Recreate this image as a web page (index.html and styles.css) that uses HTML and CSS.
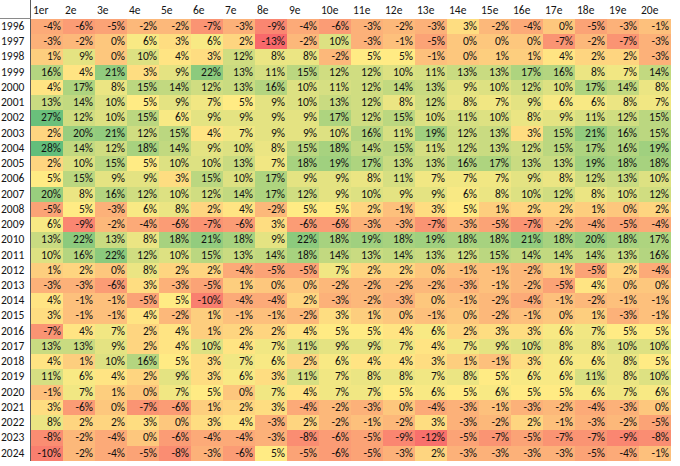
FILE: index.html
```html
<!DOCTYPE html>
<html lang="fr">
<head>
<meta charset="utf-8">
<title>Rendements par arrondissement</title>
<link rel="stylesheet" href="styles.css">
</head>
<body>
<div class="sheet">
<div class="row head"><div class="corner"></div><div>1er</div><div>2e</div><div>3e</div><div>4e</div><div>5e</div><div>6e</div><div>7e</div><div>8e</div><div>9e</div><div>10e</div><div>11e</div><div>12e</div><div>13e</div><div>14e</div><div>15e</div><div>16e</div><div>17e</div><div>18e</div><div>19e</div><div>20e</div></div>
<div class="row"><div class="yr">1996</div><div class="n4">-4%</div><div class="n6">-6%</div><div class="n5">-5%</div><div class="n2">-2%</div><div class="n2">-2%</div><div class="n7">-7%</div><div class="n3">-3%</div><div class="n9">-9%</div><div class="n4">-4%</div><div class="n6">-6%</div><div class="n3">-3%</div><div class="n2">-2%</div><div class="n3">-3%</div><div class="p3">3%</div><div class="n2">-2%</div><div class="n4">-4%</div><div class="p0">0%</div><div class="n5">-5%</div><div class="n3">-3%</div><div class="n1">-1%</div></div>
<div class="row"><div class="yr">1997</div><div class="n3">-3%</div><div class="n2">-2%</div><div class="p0">0%</div><div class="p6">6%</div><div class="p3">3%</div><div class="p6">6%</div><div class="p2">2%</div><div class="n13">-13%</div><div class="n2">-2%</div><div class="p10">10%</div><div class="n3">-3%</div><div class="n1">-1%</div><div class="n5">-5%</div><div class="p0">0%</div><div class="p0">0%</div><div class="p0">0%</div><div class="n7">-7%</div><div class="n2">-2%</div><div class="n7">-7%</div><div class="n3">-3%</div></div>
<div class="row"><div class="yr">1998</div><div class="p1">1%</div><div class="p9">9%</div><div class="p0">0%</div><div class="p10">10%</div><div class="p4">4%</div><div class="p3">3%</div><div class="p12">12%</div><div class="p8">8%</div><div class="p8">8%</div><div class="n2">-2%</div><div class="p5">5%</div><div class="p5">5%</div><div class="n1">-1%</div><div class="p0">0%</div><div class="p1">1%</div><div class="p1">1%</div><div class="p4">4%</div><div class="p2">2%</div><div class="p2">2%</div><div class="n3">-3%</div></div>
<div class="row"><div class="yr">1999</div><div class="p16">16%</div><div class="p4">4%</div><div class="p21">21%</div><div class="p3">3%</div><div class="p9">9%</div><div class="p22">22%</div><div class="p13">13%</div><div class="p11">11%</div><div class="p15">15%</div><div class="p12">12%</div><div class="p12">12%</div><div class="p10">10%</div><div class="p11">11%</div><div class="p13">13%</div><div class="p13">13%</div><div class="p17">17%</div><div class="p16">16%</div><div class="p8">8%</div><div class="p7">7%</div><div class="p14">14%</div></div>
<div class="row"><div class="yr">2000</div><div class="p4">4%</div><div class="p17">17%</div><div class="p8">8%</div><div class="p15">15%</div><div class="p14">14%</div><div class="p12">12%</div><div class="p13">13%</div><div class="p16">16%</div><div class="p10">10%</div><div class="p11">11%</div><div class="p12">12%</div><div class="p14">14%</div><div class="p13">13%</div><div class="p9">9%</div><div class="p10">10%</div><div class="p12">12%</div><div class="p10">10%</div><div class="p17">17%</div><div class="p14">14%</div><div class="p8">8%</div></div>
<div class="row"><div class="yr">2001</div><div class="p13">13%</div><div class="p14">14%</div><div class="p10">10%</div><div class="p5">5%</div><div class="p9">9%</div><div class="p7">7%</div><div class="p5">5%</div><div class="p9">9%</div><div class="p10">10%</div><div class="p13">13%</div><div class="p12">12%</div><div class="p8">8%</div><div class="p12">12%</div><div class="p8">8%</div><div class="p7">7%</div><div class="p9">9%</div><div class="p6">6%</div><div class="p6">6%</div><div class="p8">8%</div><div class="p7">7%</div></div>
<div class="row"><div class="yr">2002</div><div class="p27">27%</div><div class="p12">12%</div><div class="p10">10%</div><div class="p15">15%</div><div class="p6">6%</div><div class="p9">9%</div><div class="p9">9%</div><div class="p9">9%</div><div class="p9">9%</div><div class="p17">17%</div><div class="p12">12%</div><div class="p15">15%</div><div class="p10">10%</div><div class="p11">11%</div><div class="p10">10%</div><div class="p8">8%</div><div class="p9">9%</div><div class="p11">11%</div><div class="p12">12%</div><div class="p15">15%</div></div>
<div class="row"><div class="yr">2003</div><div class="p2">2%</div><div class="p20">20%</div><div class="p21">21%</div><div class="p12">12%</div><div class="p15">15%</div><div class="p4">4%</div><div class="p7">7%</div><div class="p9">9%</div><div class="p9">9%</div><div class="p10">10%</div><div class="p16">16%</div><div class="p11">11%</div><div class="p19">19%</div><div class="p12">12%</div><div class="p13">13%</div><div class="p3">3%</div><div class="p15">15%</div><div class="p21">21%</div><div class="p16">16%</div><div class="p15">15%</div></div>
<div class="row"><div class="yr">2004</div><div class="p28">28%</div><div class="p14">14%</div><div class="p12">12%</div><div class="p18">18%</div><div class="p14">14%</div><div class="p9">9%</div><div class="p10">10%</div><div class="p8">8%</div><div class="p15">15%</div><div class="p18">18%</div><div class="p14">14%</div><div class="p15">15%</div><div class="p11">11%</div><div class="p12">12%</div><div class="p13">13%</div><div class="p12">12%</div><div class="p15">15%</div><div class="p17">17%</div><div class="p16">16%</div><div class="p19">19%</div></div>
<div class="row"><div class="yr">2005</div><div class="p2">2%</div><div class="p10">10%</div><div class="p15">15%</div><div class="p5">5%</div><div class="p10">10%</div><div class="p10">10%</div><div class="p13">13%</div><div class="p7">7%</div><div class="p18">18%</div><div class="p19">19%</div><div class="p17">17%</div><div class="p13">13%</div><div class="p13">13%</div><div class="p16">16%</div><div class="p17">17%</div><div class="p13">13%</div><div class="p13">13%</div><div class="p19">19%</div><div class="p18">18%</div><div class="p18">18%</div></div>
<div class="row"><div class="yr">2006</div><div class="p5">5%</div><div class="p15">15%</div><div class="p9">9%</div><div class="p9">9%</div><div class="p3">3%</div><div class="p15">15%</div><div class="p10">10%</div><div class="p17">17%</div><div class="p9">9%</div><div class="p9">9%</div><div class="p8">8%</div><div class="p11">11%</div><div class="p7">7%</div><div class="p7">7%</div><div class="p7">7%</div><div class="p9">9%</div><div class="p8">8%</div><div class="p12">12%</div><div class="p13">13%</div><div class="p10">10%</div></div>
<div class="row"><div class="yr">2007</div><div class="p20">20%</div><div class="p8">8%</div><div class="p16">16%</div><div class="p12">12%</div><div class="p10">10%</div><div class="p12">12%</div><div class="p14">14%</div><div class="p17">17%</div><div class="p12">12%</div><div class="p9">9%</div><div class="p10">10%</div><div class="p9">9%</div><div class="p9">9%</div><div class="p6">6%</div><div class="p8">8%</div><div class="p10">10%</div><div class="p12">12%</div><div class="p8">8%</div><div class="p10">10%</div><div class="p12">12%</div></div>
<div class="row"><div class="yr">2008</div><div class="n5">-5%</div><div class="p5">5%</div><div class="n3">-3%</div><div class="p6">6%</div><div class="p8">8%</div><div class="p2">2%</div><div class="p4">4%</div><div class="n2">-2%</div><div class="p5">5%</div><div class="p5">5%</div><div class="p2">2%</div><div class="n1">-1%</div><div class="p3">3%</div><div class="p5">5%</div><div class="p1">1%</div><div class="p2">2%</div><div class="p2">2%</div><div class="p1">1%</div><div class="p0">0%</div><div class="p2">2%</div></div>
<div class="row"><div class="yr">2009</div><div class="p6">6%</div><div class="n9">-9%</div><div class="n2">-2%</div><div class="n4">-4%</div><div class="n6">-6%</div><div class="n7">-7%</div><div class="n6">-6%</div><div class="p3">3%</div><div class="n6">-6%</div><div class="n6">-6%</div><div class="n3">-3%</div><div class="n3">-3%</div><div class="n7">-7%</div><div class="n3">-3%</div><div class="n5">-5%</div><div class="n7">-7%</div><div class="n2">-2%</div><div class="n4">-4%</div><div class="n5">-5%</div><div class="n4">-4%</div></div>
<div class="row"><div class="yr">2010</div><div class="p13">13%</div><div class="p22">22%</div><div class="p13">13%</div><div class="p8">8%</div><div class="p18">18%</div><div class="p21">21%</div><div class="p18">18%</div><div class="p9">9%</div><div class="p22">22%</div><div class="p18">18%</div><div class="p19">19%</div><div class="p18">18%</div><div class="p19">19%</div><div class="p18">18%</div><div class="p18">18%</div><div class="p21">21%</div><div class="p18">18%</div><div class="p20">20%</div><div class="p18">18%</div><div class="p17">17%</div></div>
<div class="row"><div class="yr">2011</div><div class="p10">10%</div><div class="p16">16%</div><div class="p22">22%</div><div class="p12">12%</div><div class="p10">10%</div><div class="p15">15%</div><div class="p13">13%</div><div class="p14">14%</div><div class="p18">18%</div><div class="p14">14%</div><div class="p13">13%</div><div class="p14">14%</div><div class="p13">13%</div><div class="p12">12%</div><div class="p15">15%</div><div class="p14">14%</div><div class="p14">14%</div><div class="p14">14%</div><div class="p13">13%</div><div class="p16">16%</div></div>
<div class="row"><div class="yr">2012</div><div class="p1">1%</div><div class="p2">2%</div><div class="p0">0%</div><div class="p8">8%</div><div class="p2">2%</div><div class="p2">2%</div><div class="n4">-4%</div><div class="n5">-5%</div><div class="n5">-5%</div><div class="p7">7%</div><div class="p2">2%</div><div class="p2">2%</div><div class="p0">0%</div><div class="n1">-1%</div><div class="n1">-1%</div><div class="n2">-2%</div><div class="p1">1%</div><div class="n5">-5%</div><div class="p2">2%</div><div class="n4">-4%</div></div>
<div class="row"><div class="yr">2013</div><div class="n3">-3%</div><div class="n3">-3%</div><div class="n6">-6%</div><div class="p3">3%</div><div class="n3">-3%</div><div class="n5">-5%</div><div class="p1">1%</div><div class="p0">0%</div><div class="p0">0%</div><div class="n2">-2%</div><div class="n2">-2%</div><div class="n2">-2%</div><div class="n2">-2%</div><div class="n3">-3%</div><div class="n1">-1%</div><div class="n2">-2%</div><div class="n5">-5%</div><div class="p4">4%</div><div class="p0">0%</div><div class="p0">0%</div></div>
<div class="row"><div class="yr">2014</div><div class="p4">4%</div><div class="n1">-1%</div><div class="n1">-1%</div><div class="n5">-5%</div><div class="p5">5%</div><div class="n10">-10%</div><div class="n4">-4%</div><div class="n4">-4%</div><div class="p2">2%</div><div class="n3">-3%</div><div class="n2">-2%</div><div class="n3">-3%</div><div class="p0">0%</div><div class="n1">-1%</div><div class="n2">-2%</div><div class="n4">-4%</div><div class="n1">-1%</div><div class="n2">-2%</div><div class="n1">-1%</div><div class="n1">-1%</div></div>
<div class="row"><div class="yr">2015</div><div class="p3">3%</div><div class="n1">-1%</div><div class="n1">-1%</div><div class="p4">4%</div><div class="n2">-2%</div><div class="p1">1%</div><div class="n1">-1%</div><div class="n1">-1%</div><div class="n2">-2%</div><div class="p3">3%</div><div class="p1">1%</div><div class="p0">0%</div><div class="n1">-1%</div><div class="p0">0%</div><div class="n2">-2%</div><div class="n1">-1%</div><div class="p0">0%</div><div class="p1">1%</div><div class="n3">-3%</div><div class="n1">-1%</div></div>
<div class="row"><div class="yr">2016</div><div class="n7">-7%</div><div class="p4">4%</div><div class="p7">7%</div><div class="p2">2%</div><div class="p4">4%</div><div class="p1">1%</div><div class="p2">2%</div><div class="p2">2%</div><div class="p4">4%</div><div class="p5">5%</div><div class="p5">5%</div><div class="p4">4%</div><div class="p6">6%</div><div class="p2">2%</div><div class="p3">3%</div><div class="p3">3%</div><div class="p6">6%</div><div class="p7">7%</div><div class="p5">5%</div><div class="p5">5%</div></div>
<div class="row"><div class="yr">2017</div><div class="p13">13%</div><div class="p13">13%</div><div class="p9">9%</div><div class="p2">2%</div><div class="p4">4%</div><div class="p10">10%</div><div class="p4">4%</div><div class="p7">7%</div><div class="p11">11%</div><div class="p9">9%</div><div class="p9">9%</div><div class="p7">7%</div><div class="p4">4%</div><div class="p7">7%</div><div class="p9">9%</div><div class="p10">10%</div><div class="p8">8%</div><div class="p8">8%</div><div class="p10">10%</div><div class="p10">10%</div></div>
<div class="row"><div class="yr">2018</div><div class="p4">4%</div><div class="p1">1%</div><div class="p10">10%</div><div class="p16">16%</div><div class="p5">5%</div><div class="p3">3%</div><div class="p7">7%</div><div class="p6">6%</div><div class="p2">2%</div><div class="p6">6%</div><div class="p4">4%</div><div class="p4">4%</div><div class="p3">3%</div><div class="p1">1%</div><div class="n1">-1%</div><div class="p3">3%</div><div class="p6">6%</div><div class="p6">6%</div><div class="p8">8%</div><div class="p5">5%</div></div>
<div class="row"><div class="yr">2019</div><div class="p11">11%</div><div class="p6">6%</div><div class="p4">4%</div><div class="p2">2%</div><div class="p9">9%</div><div class="p3">3%</div><div class="p6">6%</div><div class="p3">3%</div><div class="p11">11%</div><div class="p7">7%</div><div class="p8">8%</div><div class="p8">8%</div><div class="p7">7%</div><div class="p8">8%</div><div class="p5">5%</div><div class="p6">6%</div><div class="p6">6%</div><div class="p11">11%</div><div class="p8">8%</div><div class="p10">10%</div></div>
<div class="row"><div class="yr">2020</div><div class="n1">-1%</div><div class="p7">7%</div><div class="p1">1%</div><div class="p0">0%</div><div class="p7">7%</div><div class="p5">5%</div><div class="p0">0%</div><div class="p7">7%</div><div class="p4">4%</div><div class="p7">7%</div><div class="p7">7%</div><div class="p5">5%</div><div class="p6">6%</div><div class="p5">5%</div><div class="p6">6%</div><div class="p5">5%</div><div class="p5">5%</div><div class="p6">6%</div><div class="p7">7%</div><div class="p6">6%</div></div>
<div class="row"><div class="yr">2021</div><div class="p3">3%</div><div class="n6">-6%</div><div class="p0">0%</div><div class="n7">-7%</div><div class="n6">-6%</div><div class="p1">1%</div><div class="p2">2%</div><div class="p3">3%</div><div class="n4">-4%</div><div class="n2">-2%</div><div class="n3">-3%</div><div class="p0">0%</div><div class="n4">-4%</div><div class="n3">-3%</div><div class="n1">-1%</div><div class="n3">-3%</div><div class="n2">-2%</div><div class="n4">-4%</div><div class="n3">-3%</div><div class="p0">0%</div></div>
<div class="row"><div class="yr">2022</div><div class="p8">8%</div><div class="p2">2%</div><div class="p2">2%</div><div class="p3">3%</div><div class="p0">0%</div><div class="p3">3%</div><div class="p4">4%</div><div class="n3">-3%</div><div class="p2">2%</div><div class="n2">-2%</div><div class="n1">-1%</div><div class="n2">-2%</div><div class="p3">3%</div><div class="n3">-3%</div><div class="n2">-2%</div><div class="p2">2%</div><div class="n1">-1%</div><div class="n3">-3%</div><div class="n2">-2%</div><div class="n5">-5%</div></div>
<div class="row"><div class="yr">2023</div><div class="n8">-8%</div><div class="n2">-2%</div><div class="n4">-4%</div><div class="p0">0%</div><div class="n6">-6%</div><div class="n4">-4%</div><div class="n4">-4%</div><div class="n3">-3%</div><div class="n8">-8%</div><div class="n6">-6%</div><div class="n5">-5%</div><div class="n9">-9%</div><div class="n12">-12%</div><div class="n5">-5%</div><div class="n7">-7%</div><div class="n5">-5%</div><div class="n7">-7%</div><div class="n7">-7%</div><div class="n9">-9%</div><div class="n8">-8%</div></div>
<div class="row"><div class="yr">2024</div><div class="n10">-10%</div><div class="n2">-2%</div><div class="n4">-4%</div><div class="n5">-5%</div><div class="n8">-8%</div><div class="n3">-3%</div><div class="n6">-6%</div><div class="p5">5%</div><div class="n5">-5%</div><div class="n6">-6%</div><div class="n5">-5%</div><div class="n3">-3%</div><div class="p2">2%</div><div class="n3">-3%</div><div class="n3">-3%</div><div class="n3">-3%</div><div class="n3">-3%</div><div class="n5">-5%</div><div class="n4">-4%</div><div class="n1">-1%</div></div>
</div>
</body>
</html>
```

FILE: styles.css
```css
* { box-sizing: border-box; }
html, body { margin: 0; padding: 0; background: #ffffff; }
body {
  font-family: Calibri, Carlito, "Liberation Sans", Arial, sans-serif;
  font-size: 11.5px;
  color: #111111;
}
.sheet { display: flex; flex-direction: column; width: 680px; }
.row {
  display: grid;
  grid-template-columns: 31px repeat(20, 32px);
  height: 15.24px;
}
.row > div {
  text-align: right;
  padding-right: 2px;
  line-height: 15.24px;
  white-space: nowrap;
  overflow: hidden;
}
.row > .yr {
  text-align: left;
  padding-left: 1px;
  padding-right: 0;
  border-right: 1px solid #5c5c5c;
  background: #ffffff;
  color: #151515;
}
.head { height: 19px; }
.head > div {
  text-align: left;
  padding-left: 2px;
  line-height: 21px;
  background: #ffffff;
  color: #151515;
}
.head > .corner { border-right: 1px solid #5c5c5c; border-bottom: 1px solid #8a8a8a; }

/* colour scale: red (-13%) → yellow (5%, median) → green (28%) */
.n13 { background: #f8696b; }
.n12 { background: #f8706c; }
.n10 { background: #f97f6f; }
.n9 { background: #fa8671; }
.n8 { background: #fa8d72; }
.n7 { background: #fa9473; }
.n6 { background: #fb9c75; }
.n5 { background: #fba376; }
.n4 { background: #fcaa78; }
.n3 { background: #fcb179; }
.n2 { background: #fcb87a; }
.n1 { background: #fdc07c; }
.p0 { background: #fdc77d; }
.p1 { background: #fdce7e; }
.p2 { background: #fed580; }
.p3 { background: #fedd81; }
.p4 { background: #ffe483; }
.p5 { background: #ffeb84; }
.p6 { background: #f8e984; }
.p7 { background: #f1e783; }
.p8 { background: #ebe583; }
.p9 { background: #e4e382; }
.p10 { background: #dde182; }
.p11 { background: #d6df82; }
.p12 { background: #d0dd81; }
.p13 { background: #c9db81; }
.p14 { background: #c2d980; }
.p15 { background: #bbd780; }
.p16 { background: #b4d580; }
.p17 { background: #aed47f; }
.p18 { background: #a7d27f; }
.p19 { background: #a0d07f; }
.p20 { background: #99ce7e; }
.p21 { background: #92cc7e; }
.p22 { background: #8cca7d; }
.p27 { background: #6ac07b; }
.p28 { background: #63be7b; }
```
